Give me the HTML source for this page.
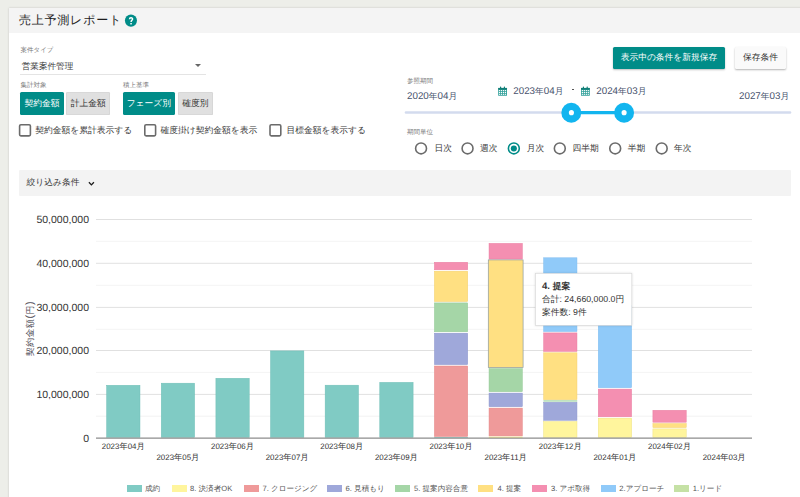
<!DOCTYPE html>
<html><head><meta charset="utf-8">
<style>
html,body{margin:0;padding:0;}
body{text-rendering:geometricPrecision;width:800px;height:497px;overflow:hidden;position:relative;background:#edeee9;font-family:"Liberation Sans",sans-serif;color:#333;}
.a{position:absolute;white-space:nowrap;line-height:1;}
#card{position:absolute;left:9px;top:8px;width:800px;height:500px;background:#fff;box-shadow:0 0 2px rgba(0,0,0,.18);}
#hdr{position:absolute;left:9px;top:8px;width:800px;height:25px;background:#f4f4f4;}
.lbl{font-size:6.5px;color:#777;}
.t14{font-size:8.75px;color:#3a3a3a;}
.btn{position:absolute;height:23.2px;border-radius:1.5px;font-size:8.75px;line-height:23px;text-align:center;}
.on{background:#008c88;color:#fff;}
.off{background:#e0e0e0;color:#333;box-shadow:inset 0 0 0 0.6px #d0d0d0;}
.cb{position:absolute;width:9.4px;height:9.9px;border:1.5px solid #727272;border-radius:1px;background:#fff;}
.rd{position:absolute;width:9.2px;height:9.2px;border:1.55px solid #707070;border-radius:50%;background:#fff;}
.dt{font-size:9.8px;color:#47526c;}
.lg{position:absolute;top:484.8px;width:15px;height:7.2px;}
.lgt{font-size:7.6px;color:#555;top:485.1px;}
</style></head><body>
<div id="card"></div>
<div id="hdr"></div>
<div class="a" style="left:19px;top:14.3px;font-size:12px;letter-spacing:0.78px;color:#1e1e1e;">売上予測レポート</div>
<svg class="a" style="left:0;top:0;" width="150" height="40"><circle cx="130.95" cy="20.6" r="6.05" fill="#008c88"/><path d="M129.5 19.2 C129.5 17.3 132.6 17.3 132.6 19.0 C132.6 20.2 131.05 20.4 131.05 22.0" fill="none" stroke="#fff" stroke-width="1.45"/><rect x="130.3" y="23.0" width="1.5" height="1.45" fill="#fff"/></svg>

<!-- left form -->
<div class="a lbl" style="left:20.5px;top:47.5px;">案件タイプ</div>
<div class="a t14" style="left:21.7px;top:62px;font-size:8.6px;">営業案件管理</div>
<div class="a" style="left:195px;top:63.7px;width:0;height:0;border-left:3px solid transparent;border-right:3px solid transparent;border-top:3px solid #666;"></div>
<div class="a" style="left:20px;top:73.9px;width:185.8px;height:0.8px;background:#e4e4e4;"></div>

<div class="a lbl" style="left:20.5px;top:82.5px;">集計対象</div>
<div class="a lbl" style="left:122.9px;top:82.5px;">積上基準</div>
<div class="btn on" style="left:20px;top:92.3px;width:43.8px;">契約金額</div>
<div class="btn off" style="left:66.2px;top:92.3px;width:44px;">計上金額</div>
<div class="btn on" style="left:122.9px;top:92.3px;width:51.9px;">フェーズ別</div>
<div class="btn off" style="left:178px;top:92.3px;width:34.9px;">確度別</div>


<svg class="a" style="left:0;top:0;" width="400" height="150"><rect x="19.6" y="124.8" width="10.8" height="11.1" rx="1.3" fill="#fff" stroke="#6b6b6b" stroke-width="1.6"/><rect x="144.8" y="124.8" width="10.8" height="11.1" rx="1.3" fill="#fff" stroke="#6b6b6b" stroke-width="1.6"/><rect x="270.0" y="124.8" width="10.8" height="11.1" rx="1.3" fill="#fff" stroke="#6b6b6b" stroke-width="1.6"/></svg>
<div class="a t14" style="left:35.3px;top:125.6px;letter-spacing:0px;">契約金額を累計表示する</div>

<div class="a t14" style="left:160.5px;top:125.6px;letter-spacing:0px;">確度掛け契約金額を表示</div>

<div class="a t14" style="left:286.5px;top:125.6px;letter-spacing:0px;">目標金額を表示する</div>

<!-- right controls -->
<div class="btn on" style="left:613px;top:46.8px;width:112px;height:22px;line-height:20.8px;box-shadow:0 1px 2px rgba(0,0,0,.25);">表示中の条件を新規保存</div>
<div class="btn" style="left:735px;top:46.8px;width:51px;height:22.4px;line-height:20.8px;background:#fafafa;color:#333;box-shadow:0 1px 2px rgba(0,0,0,.3);">保存条件</div>

<div class="a lbl" style="left:407px;top:78.8px;">参照期間</div>
<div class="a dt" style="left:407px;top:91.6px;">2020<span style="font-size:8.75px">年</span>04<span style="font-size:8.75px">月</span></div>
<div class="a dt" style="left:739px;top:91.6px;">2027<span style="font-size:8.75px">年</span>03<span style="font-size:8.75px">月</span></div>
<div class="a dt" style="left:513.25px;top:86.6px;">2023<span style="font-size:8.75px">年</span>04<span style="font-size:8.75px">月</span></div>
<div class="a dt" style="left:596.25px;top:86.6px;">2024<span style="font-size:8.75px">年</span>03<span style="font-size:8.75px">月</span></div>
<div class="a" style="left:571.9px;top:89px;width:2.1px;height:0.8px;background:#555;"></div>
<svg class="a" style="left:0;top:0;" width="800" height="200"><g transform="translate(498.2 86.6)"><rect x="0" y="1.3" width="8.8" height="7.9" rx="0.6" fill="#30a09a"/><rect x="0" y="1.3" width="8.8" height="1.8" fill="#137f78"/><rect x="1.8" y="0" width="1.2" height="2.2" rx="0.5" fill="#137f78"/><rect x="5.6" y="0" width="1.2" height="2.2" rx="0.5" fill="#137f78"/><rect x="0.8" y="3.45" width="1.2" height="1.1" fill="#fff"/><rect x="0.8" y="5.3" width="1.2" height="1.1" fill="#fff"/><rect x="0.8" y="7.15" width="1.2" height="1.1" fill="#fff"/><rect x="2.75" y="3.45" width="1.2" height="1.1" fill="#fff"/><rect x="2.75" y="5.3" width="1.2" height="1.1" fill="#fff"/><rect x="2.75" y="7.15" width="1.2" height="1.1" fill="#fff"/><rect x="4.75" y="3.45" width="1.2" height="1.1" fill="#fff"/><rect x="4.75" y="5.3" width="1.2" height="1.1" fill="#fff"/><rect x="4.75" y="7.15" width="1.2" height="1.1" fill="#fff"/><rect x="6.7" y="3.45" width="1.2" height="1.1" fill="#fff"/><rect x="6.7" y="5.3" width="1.2" height="1.1" fill="#fff"/><rect x="6.7" y="7.15" width="1.2" height="1.1" fill="#fff"/></g><g transform="translate(581 86.6)"><rect x="0" y="1.3" width="8.8" height="7.9" rx="0.6" fill="#30a09a"/><rect x="0" y="1.3" width="8.8" height="1.8" fill="#137f78"/><rect x="1.8" y="0" width="1.2" height="2.2" rx="0.5" fill="#137f78"/><rect x="5.6" y="0" width="1.2" height="2.2" rx="0.5" fill="#137f78"/><rect x="0.8" y="3.45" width="1.2" height="1.1" fill="#fff"/><rect x="0.8" y="5.3" width="1.2" height="1.1" fill="#fff"/><rect x="0.8" y="7.15" width="1.2" height="1.1" fill="#fff"/><rect x="2.75" y="3.45" width="1.2" height="1.1" fill="#fff"/><rect x="2.75" y="5.3" width="1.2" height="1.1" fill="#fff"/><rect x="2.75" y="7.15" width="1.2" height="1.1" fill="#fff"/><rect x="4.75" y="3.45" width="1.2" height="1.1" fill="#fff"/><rect x="4.75" y="5.3" width="1.2" height="1.1" fill="#fff"/><rect x="4.75" y="7.15" width="1.2" height="1.1" fill="#fff"/><rect x="6.7" y="3.45" width="1.2" height="1.1" fill="#fff"/><rect x="6.7" y="5.3" width="1.2" height="1.1" fill="#fff"/><rect x="6.7" y="7.15" width="1.2" height="1.1" fill="#fff"/></g></svg>
<svg class="a" style="left:0;top:0;" width="800" height="497">
<line x1="406" y1="112.5" x2="790" y2="112.5" stroke="#d3dbee" stroke-width="2.6" stroke-linecap="round"/>
<line x1="571.25" y1="112.6" x2="624" y2="112.6" stroke="#12b5ef" stroke-width="3.1"/>
<circle cx="571.3" cy="112.75" r="9.95" fill="#12b5ef"/><circle cx="571.4" cy="112.65" r="2.55" fill="#fff"/>
<circle cx="624.1" cy="112.75" r="9.95" fill="#12b5ef"/><circle cx="624.1" cy="112.65" r="2.55" fill="#fff"/>
</svg>

<div class="a lbl" style="left:407px;top:129.5px;">期間単位</div>
<svg class="a" style="left:0;top:0;" width="800" height="200"><circle cx="421.05" cy="148.4" r="5.45" fill="#fff" stroke="#6b6b6b" stroke-width="1.6"/><circle cx="467.55" cy="148.4" r="5.45" fill="#fff" stroke="#6b6b6b" stroke-width="1.6"/><circle cx="513.85" cy="148.4" r="5.45" fill="#fff" stroke="#008c88" stroke-width="1.6"/><circle cx="559.8" cy="148.4" r="5.45" fill="#fff" stroke="#6b6b6b" stroke-width="1.6"/><circle cx="615.2" cy="148.4" r="5.45" fill="#fff" stroke="#6b6b6b" stroke-width="1.6"/><circle cx="661.7" cy="148.4" r="5.45" fill="#fff" stroke="#6b6b6b" stroke-width="1.6"/><circle cx="513.85" cy="148.45" r="3.05" fill="#008c88"/></svg>
<div class="a t14" style="left:434.5px;top:144px;">日次</div><div class="a t14" style="left:480px;top:144px;">週次</div><div class="a t14" style="left:526.7px;top:144px;">月次</div><div class="a t14" style="left:572.5px;top:144px;">四半期</div><div class="a t14" style="left:627.8px;top:144px;">半期</div><div class="a t14" style="left:674.1px;top:144px;">年次</div>

<!-- filter bar -->
<div class="a" style="left:19px;top:170.2px;width:772px;height:25.4px;background:#f3f3f3;border-radius:1px;"></div>
<div class="a t14" style="left:26.5px;top:177.5px;">絞り込み条件</div>
<svg class="a" style="left:88px;top:181px;" width="7" height="5" viewBox="0 0 7 5"><path d="M0.9 1.3 L3.4 3.9 L5.9 1.2" fill="none" stroke="#1a1a1a" stroke-width="1.3"/></svg>

<!-- chart -->
<svg class="a" style="left:0;top:0;" width="800" height="497" id="chart">
<g stroke="#efefef" stroke-width="0.75"><line x1="96" y1="241.3" x2="752" y2="241.3"/><line x1="96" y1="285.3" x2="752" y2="285.3"/><line x1="96" y1="329.3" x2="752" y2="329.3"/><line x1="96" y1="372.4" x2="752" y2="372.4"/><line x1="96" y1="416.2" x2="752" y2="416.2"/></g>
<g stroke="#d6d6d6" stroke-width="0.75"><line x1="96" y1="219.5" x2="752" y2="219.5"/><line x1="96" y1="263.3" x2="752" y2="263.3"/><line x1="96" y1="307.4" x2="752" y2="307.4"/><line x1="96" y1="350.5" x2="752" y2="350.5"/><line x1="96" y1="394.4" x2="752" y2="394.4"/></g>
<g font-family="Liberation Sans" font-size="10.5" fill="#333" text-anchor="end"><text x="89" y="223.3">50,000,000</text><text x="89" y="267.1">40,000,000</text><text x="89" y="311.2">30,000,000</text><text x="89" y="354.3">20,000,000</text><text x="89" y="398.2">10,000,000</text><text x="89" y="441.7">0</text></g>
<text x="0" y="0" font-family="Liberation Sans" font-size="8.9" letter-spacing="0.55" fill="#4a4650" text-anchor="middle" transform="translate(33.4 328.6) rotate(-90)">契約金額<tspan font-size="10.6">(</tspan>円<tspan font-size="10.6">)</tspan></text>
<rect x="106.66" y="385.30" width="33.30" height="52.00" fill="#80cbc4" stroke="#6dbdb5" stroke-width="0.5"/>
<rect x="161.29" y="383.20" width="33.30" height="54.10" fill="#80cbc4" stroke="#6dbdb5" stroke-width="0.5"/>
<rect x="215.91" y="378.30" width="33.30" height="59.00" fill="#80cbc4" stroke="#6dbdb5" stroke-width="0.5"/>
<rect x="270.54" y="350.90" width="33.30" height="86.40" fill="#80cbc4" stroke="#6dbdb5" stroke-width="0.5"/>
<rect x="325.16" y="385.20" width="33.30" height="52.10" fill="#80cbc4" stroke="#6dbdb5" stroke-width="0.5"/>
<rect x="379.79" y="382.40" width="33.30" height="54.90" fill="#80cbc4" stroke="#6dbdb5" stroke-width="0.5"/>
<rect x="434.16" y="437.20" width="33.8" height="0.80" fill="#80cbc4"/>
<rect x="434.41" y="366.00" width="33.30" height="70.50" fill="#ef9a9a" stroke="#e58888" stroke-width="0.5"/>
<rect x="434.41" y="333.20" width="33.30" height="31.40" fill="#9fa8da" stroke="#8d97cd" stroke-width="0.5"/>
<rect x="434.41" y="302.90" width="33.30" height="28.90" fill="#a5d6a7" stroke="#93c996" stroke-width="0.5"/>
<rect x="434.41" y="271.20" width="33.30" height="30.30" fill="#ffe082" stroke="#f3d06c" stroke-width="0.5"/>
<rect x="434.41" y="262.30" width="33.30" height="7.50" fill="#f48fb1" stroke="#ea7ca0" stroke-width="0.5"/>
<rect x="488.79" y="436.60" width="33.8" height="1.40" fill="#fff59d"/>
<rect x="489.04" y="408.10" width="33.30" height="27.80" fill="#ef9a9a" stroke="#e58888" stroke-width="0.5"/>
<rect x="489.04" y="393.10" width="33.30" height="13.60" fill="#9fa8da" stroke="#8d97cd" stroke-width="0.5"/>
<rect x="489.04" y="368.60" width="33.30" height="23.10" fill="#a5d6a7" stroke="#93c996" stroke-width="0.5"/>
<rect x="489.04" y="243.40" width="33.30" height="15.70" fill="#f48fb1" stroke="#ea7ca0" stroke-width="0.5"/>
<rect x="543.66" y="421.70" width="33.30" height="15.60" fill="#fff59d" stroke="#efe27f" stroke-width="0.5"/>
<rect x="543.66" y="402.30" width="33.30" height="18.00" fill="#9fa8da" stroke="#8d97cd" stroke-width="0.5"/>
<rect x="543.41" y="400.30" width="33.8" height="1.30" fill="#a5d6a7"/>
<rect x="543.66" y="352.80" width="33.30" height="46.80" fill="#ffe082" stroke="#f3d06c" stroke-width="0.5"/>
<rect x="543.66" y="332.90" width="33.30" height="18.50" fill="#f48fb1" stroke="#ea7ca0" stroke-width="0.5"/>
<rect x="543.66" y="257.80" width="33.30" height="73.70" fill="#90caf9" stroke="#7dbcef" stroke-width="0.5"/>
<rect x="598.29" y="418.20" width="33.30" height="19.10" fill="#fff59d" stroke="#efe27f" stroke-width="0.5"/>
<rect x="598.29" y="389.10" width="33.30" height="27.70" fill="#f48fb1" stroke="#ea7ca0" stroke-width="0.5"/>
<rect x="598.29" y="305.70" width="33.30" height="82.00" fill="#90caf9" stroke="#7dbcef" stroke-width="0.5"/>
<rect x="652.91" y="428.90" width="33.30" height="8.40" fill="#fff59d" stroke="#efe27f" stroke-width="0.5"/>
<rect x="652.91" y="423.60" width="33.30" height="3.90" fill="#ffe082" stroke="#f3d06c" stroke-width="0.5"/>
<rect x="652.91" y="410.30" width="33.30" height="11.90" fill="#f48fb1" stroke="#ea7ca0" stroke-width="0.5"/>
<rect x="488.29" y="259.90" width="34.80" height="107.70" fill="#ffe082" stroke="#8c9aa0" stroke-width="0.7"/>
<line x1="96" y1="438.2" x2="752" y2="438.2" stroke="#8d8d8d" stroke-width="1.3"/>
<g font-family="Liberation Sans" font-size="7.9" fill="#333" text-anchor="middle">
<text x="123.31" y="449.2">2023<tspan font-size="8.3">年</tspan>04<tspan font-size="8.3">月</tspan></text>
<text x="177.94" y="459.5">2023<tspan font-size="8.3">年</tspan>05<tspan font-size="8.3">月</tspan></text>
<text x="232.56" y="449.2">2023<tspan font-size="8.3">年</tspan>06<tspan font-size="8.3">月</tspan></text>
<text x="287.19" y="459.5">2023<tspan font-size="8.3">年</tspan>07<tspan font-size="8.3">月</tspan></text>
<text x="341.81" y="449.2">2023<tspan font-size="8.3">年</tspan>08<tspan font-size="8.3">月</tspan></text>
<text x="396.44" y="459.5">2023<tspan font-size="8.3">年</tspan>09<tspan font-size="8.3">月</tspan></text>
<text x="451.06" y="449.2">2023<tspan font-size="8.3">年</tspan>10<tspan font-size="8.3">月</tspan></text>
<text x="505.69" y="459.5">2023<tspan font-size="8.3">年</tspan>11<tspan font-size="8.3">月</tspan></text>
<text x="560.31" y="449.2">2023<tspan font-size="8.3">年</tspan>12<tspan font-size="8.3">月</tspan></text>
<text x="614.94" y="459.5">2024<tspan font-size="8.3">年</tspan>01<tspan font-size="8.3">月</tspan></text>
<text x="669.56" y="449.2">2024<tspan font-size="8.3">年</tspan>02<tspan font-size="8.3">月</tspan></text>
<text x="724.19" y="459.5">2024<tspan font-size="8.3">年</tspan>03<tspan font-size="8.3">月</tspan></text>
</g>
<rect x="535.5" y="273.3" width="96.3" height="52" fill="#fff" stroke="#d8d8d8" stroke-width="0.6" style="filter:drop-shadow(0.6px 0.8px 0.8px rgba(0,0,0,.15))"/>
<g font-family="Liberation Sans" font-size="8.75" fill="#333"><text x="542" y="289" font-weight="bold"><tspan font-size="9.6">4. </tspan>提案</text><text x="542" y="301.7">合計: 24,660,000.0円</text><text x="542" y="314.7">案件数: 9件</text></g>
</svg>

<!-- legend -->
<div class="lg" style="left:126.6px;background:#80cbc4;"></div><div class="a lgt" style="left:145px;">成約</div>
<div class="lg" style="left:172px;background:#fff59d;"></div><div class="a lgt" style="left:190px;">8. 決済者OK</div>
<div class="lg" style="left:243.9px;background:#ef9a9a;"></div><div class="a lgt" style="left:262.5px;">7. クロージング</div>
<div class="lg" style="left:327px;background:#9fa8da;"></div><div class="a lgt" style="left:345.6px;">6. 見積もり</div>
<div class="lg" style="left:395.4px;background:#a5d6a7;"></div><div class="a lgt" style="left:414px;">5. 提案内容合意</div>
<div class="lg" style="left:478.2px;background:#ffe082;"></div><div class="a lgt" style="left:497.5px;">4. 提案</div>
<div class="lg" style="left:531.75px;background:#f48fb1;"></div><div class="a lgt" style="left:551px;">3. アポ取得</div>
<div class="lg" style="left:600.7px;background:#90caf9;"></div><div class="a lgt" style="left:619.3px;">2.アプローチ</div>
<div class="lg" style="left:673.5px;background:#c5e1a5;"></div><div class="a lgt" style="left:692.75px;">1.リード</div>
</body></html>
